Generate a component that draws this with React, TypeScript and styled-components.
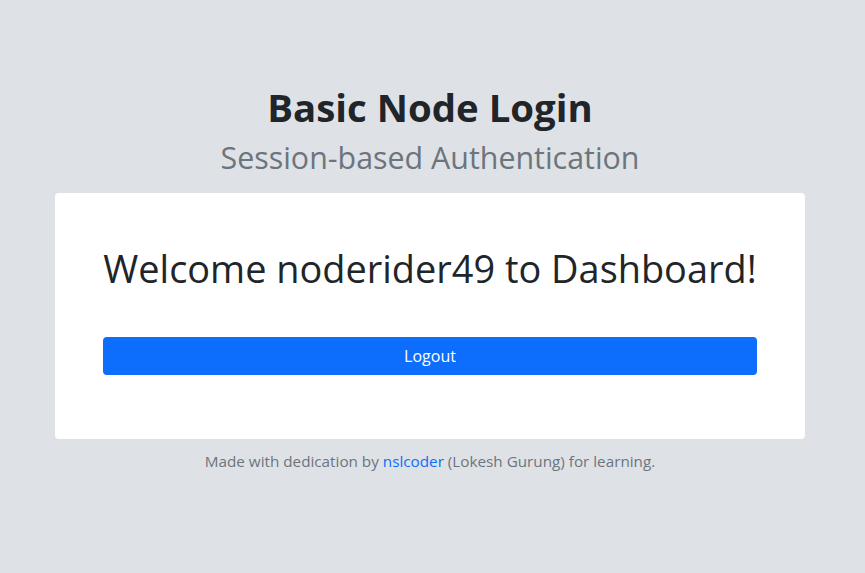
import React from "react";
import styled, { createGlobalStyle } from "styled-components";

const Global = createGlobalStyle`
  html, body { margin: 0; padding: 0; }
  body {
    background: #dee2e6;
    font-family: "Open Sans", "Noto Sans", sans-serif;
    color: #212529;
  }
`;

const Page = styled.main`
  display: flex;
  flex-direction: column;
  align-items: center;
  padding: 82px 5px 0 0;
`;

const Header = styled.header`
  display: flex;
  flex-direction: column;
  align-items: center;
  margin-bottom: 13px;
`;

const Title = styled.h1`
  margin: 0;
  font-size: 38.4px;
  font-weight: 700;
  line-height: 50px;
  color: #212529;
`;

const Subtitle = styled.h2`
  margin: 4px 0 0;
  font-size: 30.4px;
  font-weight: 400;
  line-height: 44px;
  color: #6c757d;
`;

const Card = styled.section`
  width: 750px;
  box-sizing: border-box;
  background: #fff;
  border-radius: 4px;
  padding: 47px 48px 64px;
  display: flex;
  flex-direction: column;
  align-items: stretch;
`;

const Welcome = styled.h2`
  margin: 0 0 41px;
  text-align: center;
  font-size: 37.9px;
  font-weight: 400;
  line-height: 56px;
  color: #212529;
`;

const Button = styled.button`
  height: 38px;
  border: none;
  border-radius: 4px;
  background: #0d6efd;
  color: #fff;
  font-family: inherit;
  font-size: 16px;
  cursor: pointer;
`;

const Footer = styled.p`
  margin: 11px 0 0;
  font-size: 15.25px;
  line-height: 22px;
  color: #6c757d;
`;

const Link = styled.a`
  color: #0d6efd;
  text-decoration: none;
`;

export default function App() {
  return (
    <>
      <Global />
      <Page>
        <Header>
          <Title>Basic Node Login</Title>
          <Subtitle>Session-based Authentication</Subtitle>
        </Header>
        <Card>
          <Welcome>Welcome noderider49 to Dashboard!</Welcome>
          <Button>Logout</Button>
        </Card>
        <Footer>
          Made with dedication by <Link href="#">nslcoder</Link> (Lokesh Gurung) for learning.
        </Footer>
      </Page>
    </>
  );
}
